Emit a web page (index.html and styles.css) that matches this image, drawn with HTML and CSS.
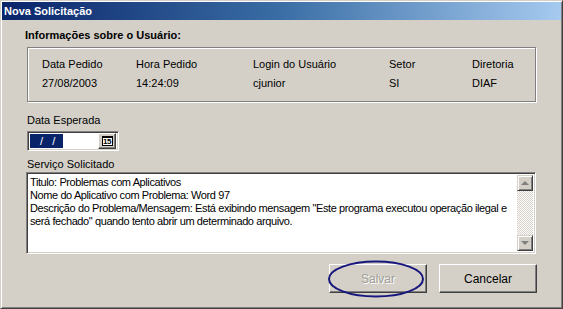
FILE: index.html
```html
<!DOCTYPE html>
<html lang="pt">
<head>
    <meta charset="UTF-8">
    <meta name="viewport" content="width=device-width, initial-scale=1.0">
    <title>Nova Solicitação</title>
    <link rel="stylesheet" href="styles.css">
</head>
<body>

    <div class="window">
        <div class="titlebar">Nova Solicitação</div>

        <div class="client">
            <h2 class="section-title">Informações sobre o Usuário:</h2>

            <div class="groupbox">
                <div class="info-col"><span>Data Pedido</span><span>27/08/2003</span></div>
                <div class="info-col"><span>Hora Pedido</span><span>14:24:09</span></div>
                <div class="info-col"><span>Login do Usuário</span><span>cjunior</span></div>
                <div class="info-col"><span>Setor</span><span>SI</span></div>
                <div class="info-col"><span>Diretoria</span><span>DIAF</span></div>
            </div>

            <label class="field-label first">Data Esperada</label>
            <div class="date-field">
                <span class="date-sel">&nbsp;/ /</span>
                <span class="cal-btn"><span class="cal-icon">15</span></span>
            </div>

            <label class="field-label second">Serviço Solicitado</label>
            <div class="memo">
                <div class="memo-text">
                    Titulo: Problemas com Aplicativos<br>
                    Nome do Aplicativo com Problema: Word 97<br>
                    Descrição do Problema/Mensagem: Está exibindo mensagem "Este programa executou operação ilegal e<br>
                    será fechado" quando tento abrir um determinado arquivo.
                </div>
                <div class="scrollbar">
                    <span class="arrow-btn"><span class="tri up"></span></span>
                    <span class="track"></span>
                    <span class="arrow-btn"><span class="tri down"></span></span>
                </div>
            </div>

            <div class="actions">
                <div class="btn-wrap">
                    <button class="btn" disabled>Salvar</button>
                    <!-- marker drawn around the save button -->
                    <svg class="ring" width="100" height="40" viewBox="0 0 100 40">
                        <ellipse cx="49" cy="19" rx="47" ry="17.5" fill="none" stroke="#16167c" stroke-width="2"/>
                    </svg>
                </div>
                <button class="btn">Cancelar</button>
            </div>
        </div>
    </div>

</body>
</html>
```
FILE: styles.css
```css
* {
    margin: 0;
    padding: 0;
    box-sizing: border-box;
}
html, body {
    width: 563px;
    height: 309px;
    overflow: hidden;
    background: #d4d0c8;
    font-family: "Liberation Sans", Arial, sans-serif;
    font-size: 11px;
    color: #000;
}
.window {
    width: 563px;
    height: 309px;
    padding: 1px;
    border: 1px solid;
    border-color: #d4d0c8 #404040 #404040 #d4d0c8;
    box-shadow: inset 1px 1px #fff, inset -1px -1px #808080;
    background: #d4d0c8;
    display: flex;
    flex-direction: column;
}
.titlebar {
    height: 18px;
    padding: 2px 0 0 2px;
    background: linear-gradient(to right, #0a246a 0%, #3a6ea5 50%, #a6caf0 100%);
    color: #fff;
    font-weight: bold;
    font-size: 11px;
    line-height: 14px;
}
.client {
    padding: 9px 25px 0 23px;
}
.section-title {
    font-size: 11px;
    font-weight: bold;
    line-height: 13px;
    margin-bottom: 5px;
}
.groupbox {
    margin-left: 2px;
    height: 55px;
    border: 1px solid #808080;
    box-shadow: 1px 1px #fff, inset 1px 1px #fff;
    padding: 10px 0 0 14px;
    display: grid;
    grid-template-columns: 94px 117px 136px 83px auto;
}
.info-col {
    display: flex;
    flex-direction: column;
    gap: 6px;
    line-height: 13px;
}
.field-label {
    display: block;
    margin-left: 2px;
    line-height: 13px;
}
.field-label.first {
    margin-top: 12px;
    margin-bottom: 4px;
}
.field-label.second {
    margin-top: 7px;
    margin-bottom: 1px;
}
.date-field {
    margin-left: 2px;
    width: 92px;
    height: 20px;
    background: #fff;
    border: 1px solid;
    border-color: #808080 #fff #fff #808080;
    box-shadow: inset 1px 1px #404040, inset -1px -1px #d4d0c8;
    padding: 2px;
    display: flex;
    justify-content: space-between;
}
.date-sel {
    width: 33px;
    background: #0a246a;
    color: #fff;
    line-height: 14px;
    padding-left: 4px;
    letter-spacing: 3px;
}
.cal-btn {
    width: 18px;
    height: 16px;
    margin-top: -1px;
    background: #d4d0c8;
    border: 1px solid;
    border-color: #fff #404040 #404040 #fff;
    box-shadow: inset -1px -1px #808080;
    display: flex;
    justify-content: center;
    align-items: center;
}
.cal-icon {
    width: 11px;
    height: 10px;
    border: 1px solid #000;
    border-top-width: 2px;
    background: #fff;
    font-size: 8px;
    font-weight: bold;
    line-height: 8px;
    text-align: center;
    letter-spacing: -0.5px;
}
.memo {
    margin-left: 1px;
    height: 82px;
    background: #fff;
    border: 1px solid;
    border-color: #808080 #fff #fff #808080;
    box-shadow: inset 1px 1px #404040, inset -1px -1px #d4d0c8;
    padding: 2px;
    display: flex;
}
.memo-text {
    flex: 1;
    padding: 1px 0 0 1px;
    line-height: 13px;
    white-space: nowrap;
    letter-spacing: -0.4px;
}
.scrollbar {
    width: 16px;
    display: flex;
    flex-direction: column;
}
.track {
    flex: 1;
    background: repeating-conic-gradient(#fff 0 25%, #d4d0c8 0 50%) 0 0 / 2px 2px;
}
.arrow-btn {
    height: 16px;
    background: #d4d0c8;
    border: 1px solid;
    border-color: #d4d0c8 #404040 #404040 #d4d0c8;
    box-shadow: inset 1px 1px #fff, inset -1px -1px #808080;
    display: flex;
    justify-content: center;
    align-items: center;
}
.tri {
    width: 0;
    height: 0;
    border-left: 4px solid transparent;
    border-right: 4px solid transparent;
}
.tri.up {
    border-bottom: 4px solid #808080;
}
.tri.down {
    border-top: 4px solid #808080;
}
.actions {
    margin-top: 10px;
    display: flex;
    justify-content: flex-end;
    gap: 12px;
    margin-right: -1px;
}
.btn-wrap {
    position: relative;
}
.btn {
    display: block;
    width: 98px;
    height: 29px;
    background: #d4d0c8;
    font-family: "Liberation Sans", Arial, sans-serif;
    font-size: 12px;
    color: #000;
    border: 1px solid;
    border-color: #fff #404040 #404040 #fff;
    box-shadow: inset -1px -1px #808080;
}
.btn:disabled {
    color: #a09e98;
    text-shadow: 1px 1px #fff;
}
.ring {
    position: absolute;
    left: -2px;
    top: -4px;
}
```
